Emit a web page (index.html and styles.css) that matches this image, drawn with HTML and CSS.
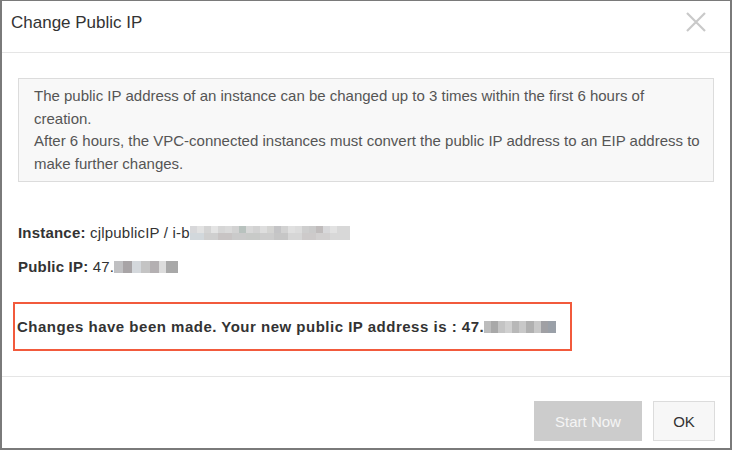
FILE: index.html
```html
<!DOCTYPE html>
<html>
<head>
<meta charset="utf-8">
<link rel="stylesheet" href="styles.css">
</head>
<body>
<div class="dialog">
  <div class="header">
    <div class="title">Change Public IP</div>
    <svg class="close" width="22" height="22" viewBox="0 0 22 22"><path d="M2 2 L20 20 M20 2 L2 20" stroke="#c9c9c9" stroke-width="2.2" fill="none"/></svg>
  </div>
  <div class="body">
    <div class="info">The public IP address of an instance can be changed up to 3 times within the first 6 hours of creation.<br>After 6 hours, the VPC-connected instances must convert the public IP address to an EIP address to make further changes.</div>
    <div class="field"><b>Instance:</b> cjlpublicIP / i-b<span class="mosaic m-inst"></span></div>
    <div class="field field-ip"><b>Public IP:</b> 47.<span class="mosaic m-ip"></span></div>
    <div class="result"><b>Changes have been made. Your new public IP address is : 47.<span class="mosaic m-new"></span></b></div>
  </div>
  <div class="footer">
    <button class="btn btn-disabled">Start Now</button>
    <button class="btn btn-ok">OK</button>
  </div>
</div>
</body>
</html>
```

FILE: styles.css
```css
html, body { margin: 0; padding: 0; background: #fff; }
body { font-family: "Liberation Sans", Arial, sans-serif; color: #333; }
.dialog {
  width: 732px; height: 450px; box-sizing: border-box;
  border: 1px solid #7a7a7a; border-left-width: 2px; border-bottom-width: 2px; border-right-width: 2px;
  display: flex; flex-direction: column; background: #fff;
}
.header {
  height: 52px; box-sizing: border-box; border-bottom: 1px solid #e5e5e5;
  display: flex; justify-content: space-between; align-items: flex-start;
  padding: 10px 23px 0 9px;
}
.title { font-size: 17px; line-height: 24px; color: #333; }
.body { padding: 25px 16px 0 16px; }
.info {
  background: #f8f8f8; border: 1px solid #dcdcdc;
  padding: 6px 10px 6px 15px; font-size: 15px; line-height: 22.5px; color: #555;
}
.field { margin-top: 41px; font-size: 15px; line-height: 20px; color: #333; letter-spacing: 0.2px; }
.field-ip { margin-top: 14px; }
.field b { color: #333; }
.mosaic { display: inline-block; vertical-align: middle; }
.m-inst {
  width: 160px; height: 14px; margin-top: -3px;
  background:
    linear-gradient(90deg, #d8d8da 0 7px, #e2e2e2 7px 14px, #d4d4d4 14px 21px, #e4e4e4 21px 28px, #d6d6d6 28px 35px, #dadada 35px 42px, #d2d2d2 42px 49px, #b8c2be 49px 56px, #d8d8d8 56px 63px, #d2d2d2 63px 70px, #dedede 70px 77px, #d4d4d2 77px 84px, #c4c4c6 84px 91px, #d2d2d2 91px 98px, #e0e0e0 98px 105px, #dcdcdc 105px 112px, #cecece 112px 119px, #cacaca 119px 126px, #c0bcbc 126px 133px, #d8d8da 133px 140px, #e2e2e2 140px 147px, #d8d8d8 147px 160px) top / 100% 7px no-repeat,
    linear-gradient(90deg, #d2d8dc 0 14px, #cfcfcf 14px 28px, #c8c4c4 28px 42px, #cacaca 42px 56px, #c8cac8 56px 70px, #cdcdcd 70px 84px, #c6c6c6 84px 98px, #d6d6d6 98px 112px, #cdcaca 112px 126px, #d2d0d0 126px 140px, #d8d8d8 140px 160px) bottom / 100% 7px no-repeat;
}
.m-ip {
  width: 64px; height: 12px; margin-top: -3px;
  background: linear-gradient(90deg, #c0c0c2 0 9px, #a8a4a6 9px 18px, #d4d8dc 18px 27px, #c4c4c4 27px 36px, #b4b0b2 36px 45px, #dcdcdc 45px 52px, #a8a8a8 52px 64px);
}
.result {
  margin: 25px 0 0 -5px; width: 559px; box-sizing: border-box;
  border: 2px solid #f25a3c; padding: 13px 2px 12px 2px;
  font-size: 15px; line-height: 20px; color: #333; letter-spacing: 0.5px;
}
.m-new {
  width: 72px; height: 12px; margin-top: -3px;
  background: linear-gradient(90deg, #bcbcbc 0 7px, #a8a8a8 7px 14px, #c4c4c4 14px 21px, #d0d0d0 21px 28px, #b8b8b8 28px 35px, #c8c8c8 35px 42px, #b0b0b0 42px 50px, #c8c8c8 50px 57px, #a0a0a4 57px 64px, #9aa0a8 64px 72px);
}
.footer {
  margin-top: auto; height: 72px; box-sizing: border-box;
  border-top: 1px solid #e5e5e5;
  display: flex; justify-content: flex-end; align-items: flex-start; gap: 11px;
  padding: 24px 15px 0 0;
}
.btn {
  height: 40px; font-family: "Liberation Sans", Arial, sans-serif; font-size: 15px;
  border: 1px solid #dcdcdc; padding: 0; cursor: pointer;
}
.btn-disabled { width: 108px; background: #cccccc; border-color: #cccccc; color: #f5f5f5; }
.btn-ok { width: 62px; background: #f7f7f7; color: #333; }
```
